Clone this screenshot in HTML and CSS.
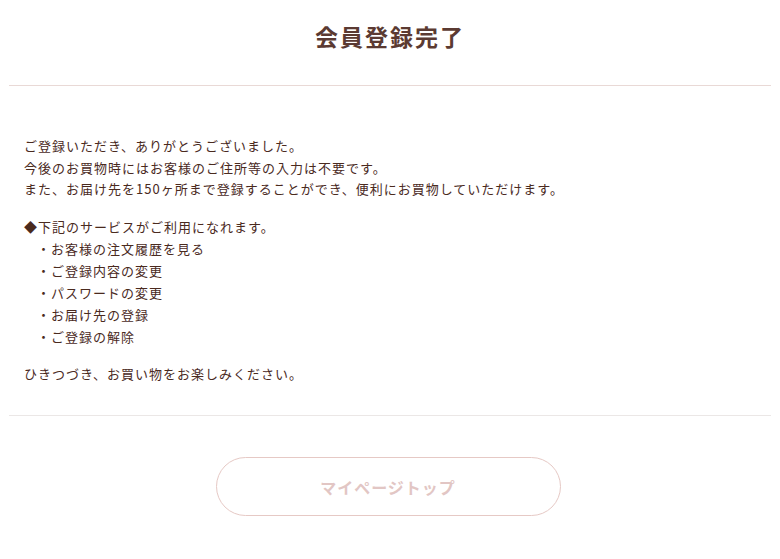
FILE: index.html
```html
<!DOCTYPE html>
<html lang="ja">
<head>
<meta charset="utf-8">
<title>会員登録完了</title>
<link rel="stylesheet" href="styles.css">
</head>
<body>
<div class="page">
  <h1 class="title">会員登録完了</h1>
  <div class="content">
    <p class="para">ご登録いただき、ありがとうございました。<br>今後のお買物時にはお客様のご住所等の入力は不要です。<br>また、お届け先を150ヶ所まで登録することができ、便利にお買物していただけます。</p>
    <p class="lead">◆下記のサービスがご利用になれます。</p>
    <ul class="services">
      <li>・お客様の注文履歴を見る</li>
      <li>・ご登録内容の変更</li>
      <li>・パスワードの変更</li>
      <li>・お届け先の登録</li>
      <li>・ご登録の解除</li>
    </ul>
    <p class="para closing">ひきつづき、お買い物をお楽しみください。</p>
  </div>
  <div class="actions">
    <a class="btn" href="#">マイページトップ</a>
  </div>
</div>
</body>
</html>
```
FILE: styles.css
```css
html, body {
  margin: 0;
  padding: 0;
  background: #fff;
}
body {
  font-family: "Noto Sans CJK JP", "Noto Sans", sans-serif;
  color: #4a2a1e;
}
.page {
  margin: 0 9px;
}
.title {
  margin: 0;
  height: 86px;
  box-sizing: border-box;
  padding-top: 21px;
  text-align: center;
  font-size: 23px;
  line-height: 30px;
  font-weight: 700;
  color: #5b3a32;
  letter-spacing: 2px;
  text-indent: 0;
  border-bottom: 1px solid #e9d9d6;
}
.content {
  padding: 49px 15px 31px;
  border-bottom: 1px solid #ebe7e6;
  font-size: 13px;
  line-height: 21.5px;
  letter-spacing: 1px;
}
.para {
  margin: 0;
}
.lead {
  margin: 16px 0 0;
  line-height: 22px;
}
.services {
  list-style: none;
  margin: 0;
  padding: 0 0 0 13px;
  line-height: 22px;
}
.closing {
  margin-top: 15px;
}
.actions {
  display: flex;
  justify-content: center;
  padding: 41px 4px 0 0;
}
.btn {
  display: flex;
  align-items: center;
  justify-content: center;
  width: 345px;
  height: 59px;
  box-sizing: border-box;
  border: 1px solid #e6c9c5;
  border-radius: 30px;
  text-decoration: none;
  color: #e2c6c4;
  font-weight: 700;
  font-size: 16px;
  letter-spacing: 1px;
}
```
